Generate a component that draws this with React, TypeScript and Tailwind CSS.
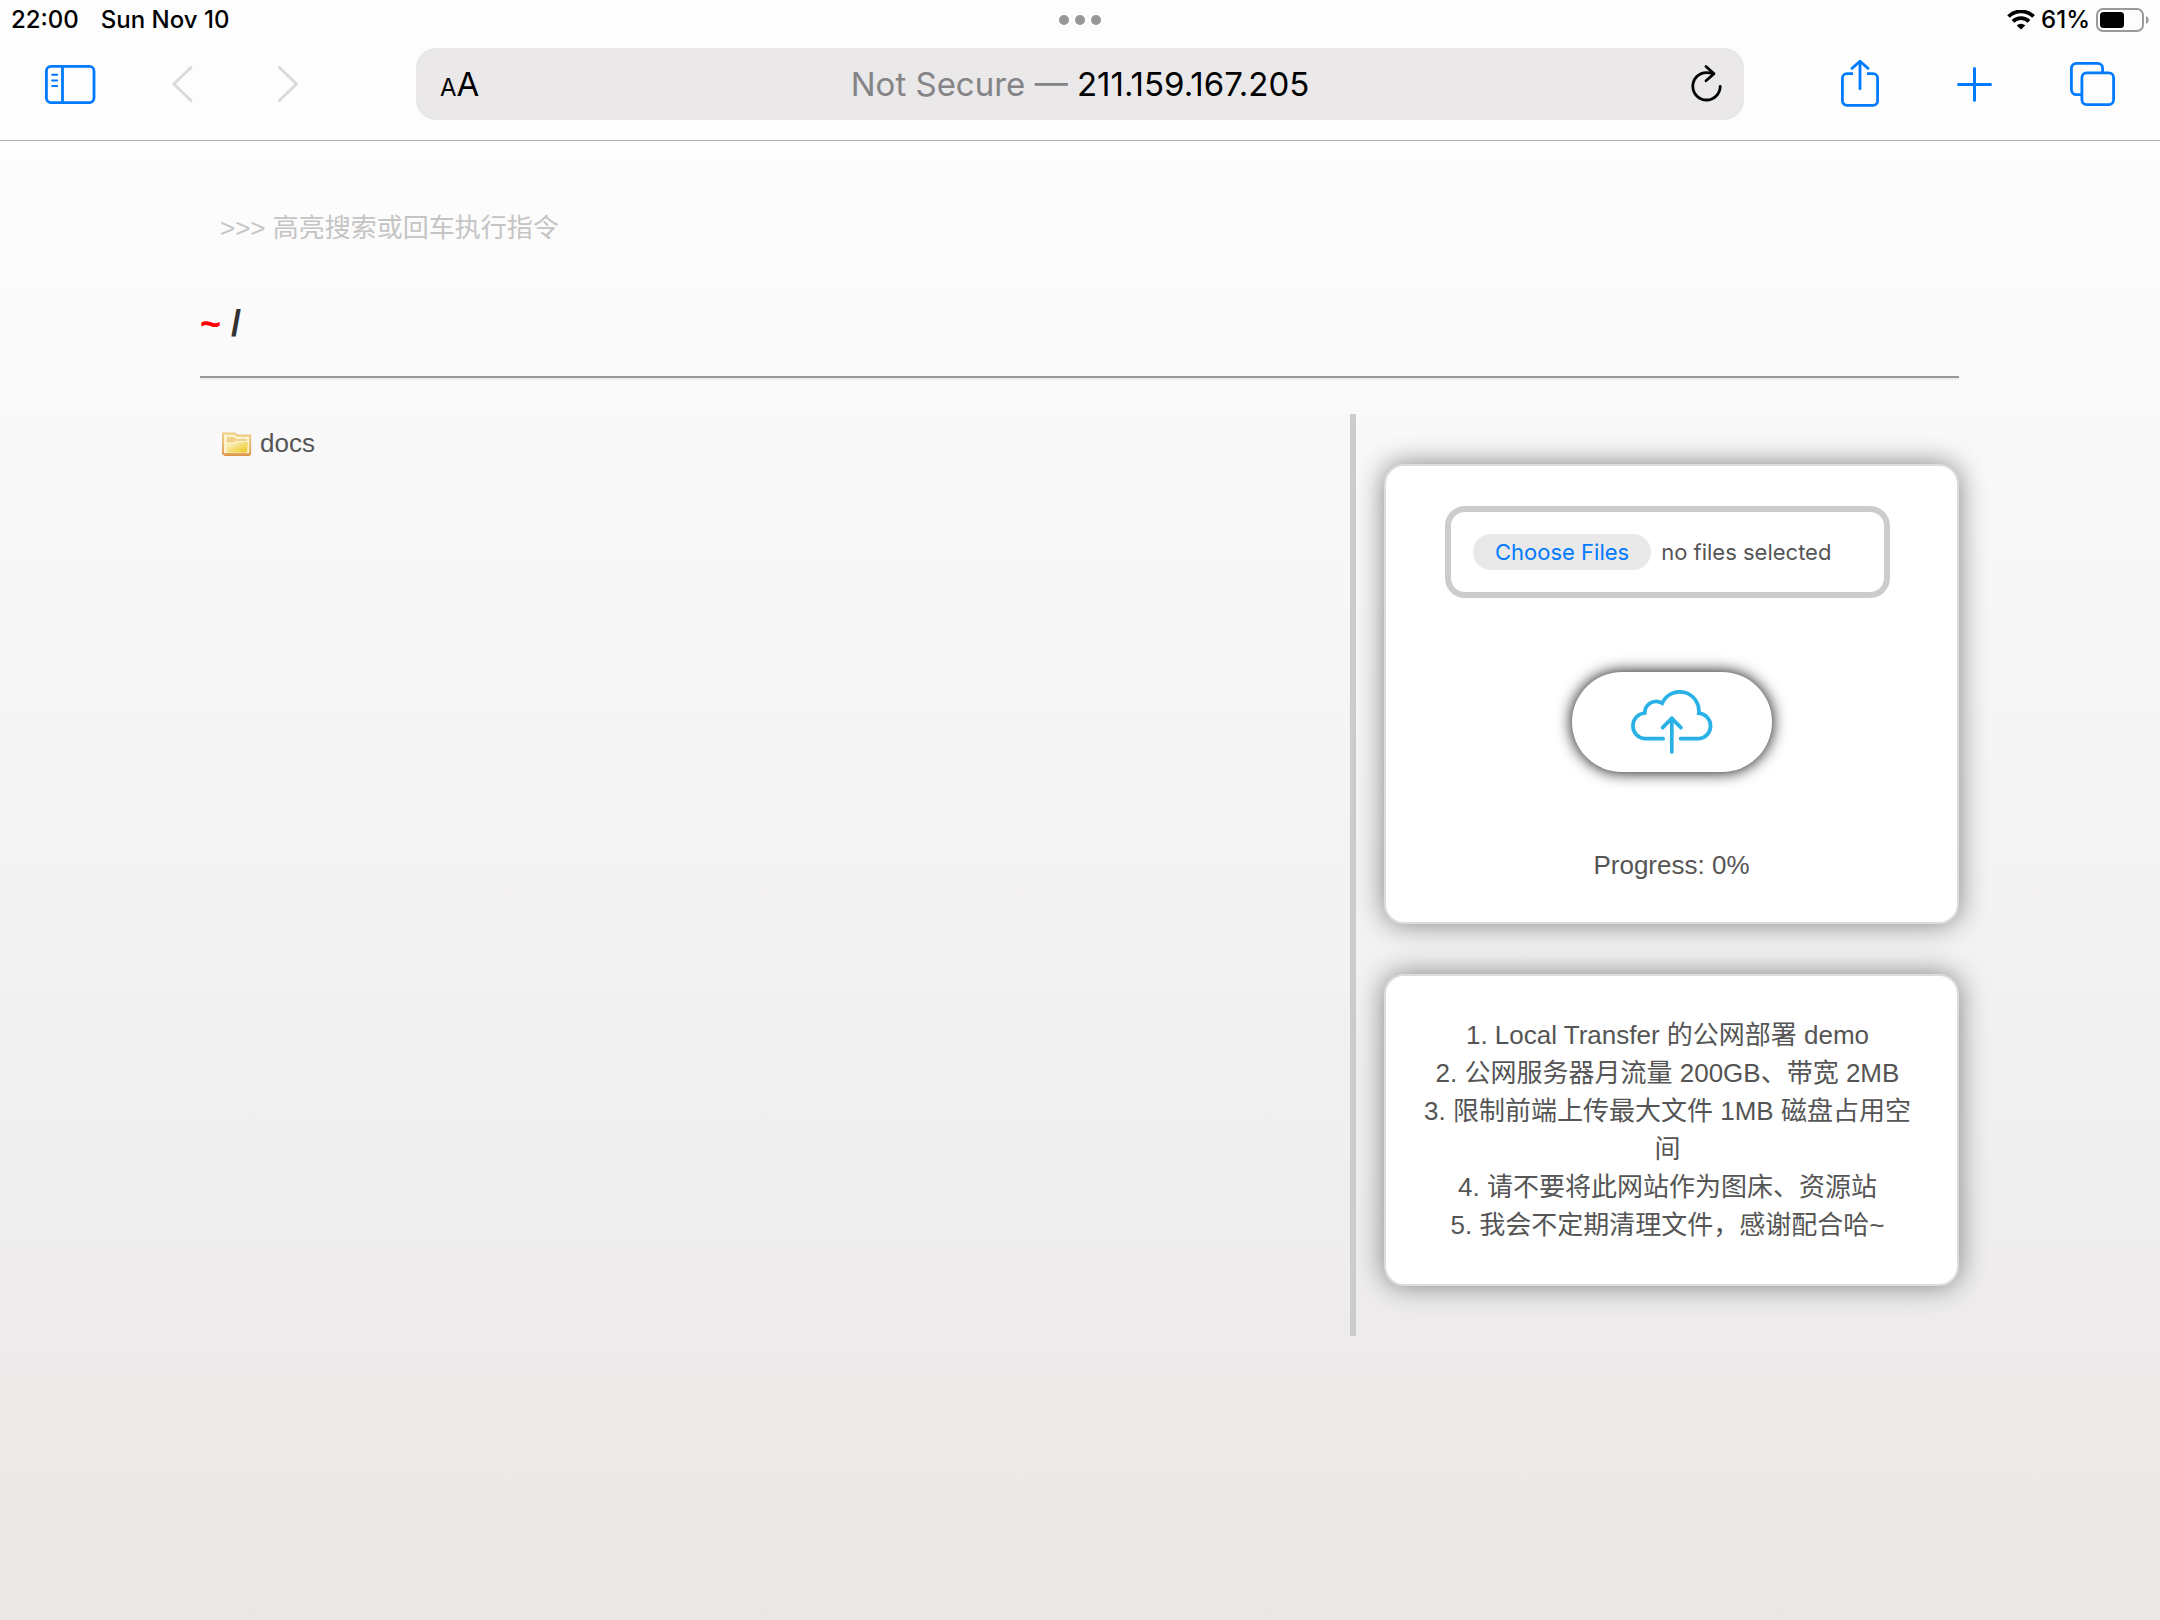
import React from "react";

const uiFont = "font-['Inter','Noto_Sans_CJK_SC',sans-serif]";

function StatusBar() {
  return (
    <div className="grid h-10 grid-cols-3 items-center px-[11px] text-[24px] leading-7 font-medium">
      <div className="flex gap-[22px]">
        <span>22:00</span>
        <span>Sun Nov 10</span>
      </div>
      <div className="flex justify-center gap-1.5">
        <span className="size-2.5 rounded-full bg-[#979797]" />
        <span className="size-2.5 rounded-full bg-[#979797]" />
        <span className="size-2.5 rounded-full bg-[#979797]" />
      </div>
      <div className="flex items-center justify-end gap-1.5">
        <svg width="28" height="20" viewBox="0 0 28 20" fill="none" aria-label="Wi-Fi">
          <path d="M1.5 6.5 A18 18 0 0 1 26.5 6.5" stroke="#000" strokeWidth="3.8" />
          <path d="M6 11.3 A11.6 11.6 0 0 1 22 11.3" stroke="#000" strokeWidth="3.8" />
          <path d="M14 19.6 L9.7 15.4 A6.4 6.4 0 0 1 18.3 15.4 Z" fill="#000" />
        </svg>
        <span>61%</span>
        <svg width="53" height="24" viewBox="0 0 53 24" fill="none" aria-label="Battery">
          <rect x="1" y="1" width="46" height="22" rx="6" stroke="#9a9a9a" strokeWidth="2" />
          <rect x="4" y="4" width="24" height="16" rx="3.5" fill="#000" />
          <path d="M50 8 C53.5 9.5 53.5 14.5 50 16 Z" fill="#9a9a9a" />
        </svg>
      </div>
    </div>
  );
}

function Toolbar() {
  return (
    <div className="grid h-[100px] grid-cols-[416fr_1328fr_416fr] items-start pt-2 text-[#007aff]">
      <div className="flex h-[72px] items-center gap-[54px] pl-11">
        <button className="w-[58px]" aria-label="Show sidebar">
          <svg width="52" height="48" viewBox="0 0 52 48" fill="none" stroke="currentColor" strokeWidth="2.8">
            <rect x="2.4" y="6.4" width="47.6" height="36.2" rx="4.5" />
            <path d="M18.5 6.4 V42.6" />
            <path d="M8.2 14.8 H13.2 M8.2 20.4 H13.2 M8.2 26 H13.2" strokeWidth="2" strokeLinecap="round" />
          </svg>
        </button>
        <button className="w-[52px] text-[#dadada]" aria-label="Back">
          <svg width="52" height="48" viewBox="0 0 52 48" fill="none" stroke="currentColor" strokeWidth="3" strokeLinecap="round" strokeLinejoin="round">
            <path d="M35 7.5 L17.8 24 L35 40.5" />
          </svg>
        </button>
        <button className="w-[52px] text-[#dadada]" aria-label="Forward">
          <svg width="52" height="48" viewBox="0 0 52 48" fill="none" stroke="currentColor" strokeWidth="3" strokeLinecap="round" strokeLinejoin="round">
            <path d="M17.5 7.5 L34.5 24 L17.5 40.5" />
          </svg>
        </button>
      </div>

      <div className="grid h-[72px] grid-cols-[1fr_auto_1fr] items-center rounded-[20px] bg-[#eae8e9] px-3.5 text-black">
        <button className="flex items-baseline justify-self-start px-2.5 pt-1" aria-label="Page settings">
          <span className="text-[24px] leading-10">A</span>
          <span className="text-[33px] leading-10">A</span>
        </button>
        <div className="text-[33px] leading-10">
          <span className="text-[#848486]">Not Secure — </span>
          <span>211.159.167.205</span>
        </div>
        <button className="justify-self-end" aria-label="Reload">
          <svg width="48" height="48" viewBox="0 0 48 48" fill="none" stroke="currentColor" strokeWidth="2.8" strokeLinecap="round" strokeLinejoin="round">
            <path d="M38.2 26.3 A13.7 13.7 0 1 1 24.5 12.6 Q28 12.6 31.4 13.6" />
            <path d="M24 6.5 L32 13.7 L24 20.8" />
          </svg>
        </button>
      </div>

      <div className="flex h-[72px] items-center justify-end gap-[68px] pr-11">
        <button aria-label="Share">
          <svg width="48" height="48" viewBox="0 0 48 48" fill="none" stroke="currentColor" strokeWidth="2.8" strokeLinecap="round" strokeLinejoin="round">
            <path d="M17 13.7 H11 A4.6 4.6 0 0 0 6.4 18.3 V40.8 A4.6 4.6 0 0 0 11 45.4 H37 A4.6 4.6 0 0 0 41.6 40.8 V18.3 A4.6 4.6 0 0 0 37 13.7 H31" strokeLinecap="butt" />
            <path d="M24 1.5 V28.8" />
            <path d="M16 8.4 L24 1.2 L32 8.4" />
          </svg>
        </button>
        <button aria-label="New tab">
          <svg width="48" height="48" viewBox="0 0 48 48" fill="none" stroke="currentColor" strokeWidth="3" strokeLinecap="round">
            <path d="M22.5 8.5 V40.3 M6.5 24.4 H38.5" />
          </svg>
        </button>
        <button aria-label="Tabs">
          <svg width="48" height="48" viewBox="0 0 48 48" fill="none" stroke="currentColor" strokeWidth="2.8">
            <rect x="13.9" y="12.9" width="31.7" height="31.7" rx="4.8" />
            <path d="M13.9 34.6 H8.4 A5 5 0 0 1 3.4 29.6 V8.4 A5 5 0 0 1 8.4 3.4 H29.6 A5 5 0 0 1 34.6 8.4 V12.9" />
          </svg>
        </button>
      </div>
    </div>
  );
}

function FolderIcon() {
  return (
    <svg width="32" height="26" viewBox="-2 -2 32 26" aria-hidden="true">
      <defs>
        <linearGradient id="folderEdge" x1="0" y1="0" x2="0" y2="1">
          <stop offset="0" stopColor="#edcd80" />
          <stop offset="1" stopColor="#dd9648" />
        </linearGradient>
        <linearGradient id="folderFront" x1="0" y1="0" x2="1" y2="1">
          <stop offset="0.2" stopColor="#f8ebb0" />
          <stop offset="0.8" stopColor="#f0cf3c" />
        </linearGradient>
      </defs>
      <path d="M1 1.5 H13 L15 3.5 H28.2 V22 L27 23 H3 L1 21.5 Z" fill="#fcf1cd" stroke="url(#folderEdge)" strokeWidth="1.8" />
      <path d="M5 5 H12 L14 7 H25 V9 H14 L12 10.5 H5 Z" fill="#efd28a" />
      <path d="M5 12 H13 L15 10 H26 L25 20.5 H5 Z" fill="url(#folderFront)" />
      <path d="M2.5 22 H28" stroke="#e0a056" strokeWidth="1.8" />
    </svg>
  );
}

function CloudUploadIcon() {
  return (
    <svg width="84" height="64" viewBox="0 0 84 64" fill="none" stroke="#29b1e6" strokeWidth="3.7" strokeLinecap="round" aria-hidden="true">
      <path d="M33.2 48.7 H14.6 A12.9 12.9 0 0 1 14.8 23 A11.4 11.4 0 0 1 32.2 13.2 A19.2 19.2 0 0 1 68.8 23.2 A12.8 12.8 0 0 1 69 48.7 H50.6" />
      <path d="M41.8 28.2 V62" />
      <path d="M32.6 37.6 L41.8 28.4 L51 37.6" strokeLinejoin="round" />
    </svg>
  );
}

const cardClass =
  "rounded-[20px] border-2 border-[#dcdcdc] bg-white shadow-[0_0_28px_#808080]";

const notes = [
  "1. Local Transfer 的公网部署 demo",
  "2. 公网服务器月流量 200GB、带宽 2MB",
  "3. 限制前端上传最大文件 1MB 磁盘占用空间",
  "4. 请不要将此网站作为图床、资源站",
  "5. 我会不定期清理文件，感谢配合哈~",
];

export default function App() {
  return (
    <div
      lang="zh-CN"
      className="flex min-h-screen flex-col bg-linear-to-b from-white via-[#f4f2f3] via-55% to-[#e9e8e6] font-['Liberation_Sans','Noto_Sans_CJK_SC',sans-serif] text-[26px] leading-[38px] text-[#555555]"
    >
      <header className={`border-b border-[#b2b2b4] bg-[#fdfdfd] text-black ${uiFont}`}>
        <StatusBar />
        <Toolbar />
      </header>

      <main className="pt-[50px] pr-[201px] pl-[200px]">
        <input
          type="text"
          aria-label="高亮搜索或回车执行指令"
          placeholder=">>> 高亮搜索或回车执行指令"
          className="block h-[75px] w-full bg-transparent px-5 outline-none placeholder:text-[#c4c4c4]"
        />
        <h1 className="mt-7 text-[36px] leading-[60px] font-bold text-[#333333]">
          <span className="text-[#ff0000]">~</span> /
        </h1>
        <hr className="mt-[22px] border-t-2 border-b-2 border-t-[#999999] border-b-[#eeeeee]" />

        <div className="mt-[34px] flex">
          <section className="flex-1 px-5 pt-2.5">
            <a href="#docs" className="flex w-fit items-center gap-2">
              <FolderIcon />
              docs
            </a>
          </section>

          <aside className="flex w-[609px] flex-col gap-[50px] border-l-6 border-[#cccccc] py-[50px] pl-7">
            <form className={`flex flex-col items-center pt-10 pb-[38px] ${cardClass}`}>
              <div className="w-full pr-2">
                <label className={`mx-auto flex h-[92px] w-[445px] items-center gap-2.5 rounded-[20px] border-6 border-[#cccccc] px-[22px] text-[22px] leading-9 ${uiFont}`}>
                  <input type="file" multiple className="sr-only" />
                  <span className="rounded-full bg-[#e9e9ea] px-[22px] text-[#007aff]">Choose Files</span>
                  <span>no files selected</span>
                </label>
              </div>
              <button
                type="button"
                aria-label="Upload"
                className="mt-[74px] flex h-[100px] w-[200px] items-center justify-center rounded-[50px] bg-white shadow-[0_0_16px_#000000]"
              >
                <CloudUploadIcon />
              </button>
              <p className="mt-[74px]">Progress: 0%</p>
            </form>

            <ul className={`py-10 pr-10 pl-8 text-center ${cardClass}`}>
              {notes.map((note) => (
                <li key={note}>{note}</li>
              ))}
            </ul>
          </aside>
        </div>
      </main>
    </div>
  );
}
